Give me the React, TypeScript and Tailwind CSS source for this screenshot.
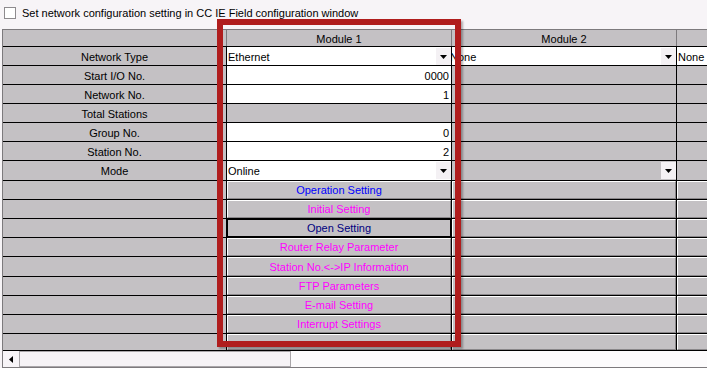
import React from "react";

type Cell =
  | { kind: "gray" }
  | { kind: "num"; text: string }
  | { kind: "select"; text: string; clip?: boolean }
  | { kind: "graySelect" }
  | { kind: "white"; text: string }
  | { kind: "btn"; text?: string; color?: string; focused?: boolean };

const labels = [
  "Network Type",
  "Start I/O No.",
  "Network No.",
  "Total Stations",
  "Group No.",
  "Station No.",
  "Mode",
  "",
  "",
  "",
  "",
  "",
  "",
  "",
  "",
  "",
];

// the original grid is not perfectly regular: two rows are a pixel taller, the last is cut by the scrollbar
const rowHeight = (i: number) => {
  if (i === 6 || i === 11) return "h-[20px]";
  if (i === 15) return "h-[17px]";
  return "h-[19px]";
};

const PINK = "text-[#ff00ff]";

const module1: Cell[] = [
  { kind: "select", text: "Ethernet" },
  { kind: "num", text: "0000" },
  { kind: "num", text: "1" },
  { kind: "gray" },
  { kind: "num", text: "0" },
  { kind: "num", text: "2" },
  { kind: "select", text: "Online" },
  { kind: "btn", text: "Operation Setting", color: "text-[#0000ff]" },
  { kind: "btn", text: "Initial Setting", color: PINK },
  { kind: "btn", text: "Open Setting", color: "text-[#000080]", focused: true },
  { kind: "btn", text: "Router Relay Parameter", color: PINK },
  { kind: "btn", text: "Station No.<->IP Information", color: PINK },
  { kind: "btn", text: "FTP Parameters", color: PINK },
  { kind: "btn", text: "E-mail Setting", color: PINK },
  { kind: "btn", text: "Interrupt Settings", color: PINK },
  { kind: "btn" },
];

const module2: Cell[] = [
  { kind: "select", text: "None", clip: true },
  { kind: "gray" },
  { kind: "gray" },
  { kind: "gray" },
  { kind: "gray" },
  { kind: "gray" },
  { kind: "graySelect" },
  ...Array.from({ length: 9 }, (): Cell => ({ kind: "btn" })),
];

const module3: Cell[] = [
  { kind: "white", text: "None" },
  ...Array.from({ length: 6 }, (): Cell => ({ kind: "gray" })),
  ...Array.from({ length: 9 }, (): Cell => ({ kind: "btn" })),
];

const DropButton: React.FC = () => (
  <div className="absolute right-0 top-[1px] w-[15px] h-[17px] bg-[#f4f1f4] flex items-center justify-center">
    <svg width="7" height="4" viewBox="0 0 7 4">
      <path d="M0 0h7L3.5 4z" fill="#000" />
    </svg>
  </div>
);

const GridCell: React.FC<{ cell: Cell }> = ({ cell }) => {
  switch (cell.kind) {
    case "gray":
      return <div className="h-full bg-[#c4c1c4]" />;
    case "num":
      return (
        <div className="h-full bg-white flex items-center justify-end pr-[2px] pt-[2px]">
          {cell.text}
        </div>
      );
    case "white":
      return (
        <div className="h-full bg-white flex items-center pl-[1px] pt-[2px] whitespace-nowrap">
          {cell.text}
        </div>
      );
    case "select":
      return (
        <div className="relative h-full bg-white flex items-center pt-[2px] overflow-hidden whitespace-nowrap">
          <span className={cell.clip ? "-ml-[2px]" : "pl-[1px]"}>{cell.text}</span>
          <DropButton />
        </div>
      );
    case "graySelect":
      return (
        <div className="relative h-full bg-[#c4c1c4]">
          <DropButton />
        </div>
      );
    case "btn":
      return (
        <div
          className={`h-full bg-[#c4c1c4] flex items-center justify-center pt-[1px] whitespace-nowrap ${
            cell.focused
              ? "border border-black"
              : "border-t border-l border-t-white border-l-white border-b border-r border-b-[#8a878a] border-r-[#8a878a]"
          } ${cell.color ?? ""}`}
        >
          {cell.text}
        </div>
      );
  }
};

export default function App() {
  return (
    <div className="w-[707px] h-[368px] overflow-hidden bg-[#f7f4f7] font-['Liberation_Sans',Arial,sans-serif] text-[11px] text-black leading-none relative select-none">
      {/* top checkbox */}
      <div className="h-[29px] flex items-start pt-[7px] pl-[4px]">
        <div className="w-[12px] h-[12px] border border-[#8e8b8e] bg-white" />
        <span className="ml-[6px] mt-[1px]">
          Set network configuration setting in CC IE Field configuration window
        </span>
      </div>

      {/* grid */}
      <div className="ml-[2px] border-l border-t border-[#7d7a7d] w-[720px]">
        <div className="flex h-[17px] border-b border-black">
          <div className="w-[224px] shrink-0 bg-[#c4c1c4] border-r border-[#7d7a7d]" />
          <div className="w-[225px] shrink-0 bg-[#c4c1c4] border-r border-[#7d7a7d] flex items-center justify-center pt-[2px]">
            Module 1
          </div>
          <div className="w-[225px] shrink-0 bg-[#c4c1c4] border-r border-[#7d7a7d] flex items-center justify-center pt-[2px]">
            Module 2
          </div>
          <div className="flex-1 bg-[#c4c1c4]" />
        </div>
        {labels.map((label, i) => (
          <div key={i} className={`flex border-b border-black ${rowHeight(i)}`}>
            <div className="w-[224px] shrink-0 bg-[#c4c1c4] border-r border-black flex items-center justify-center pt-[2px]">
              {label}
            </div>
            <div className="w-[225px] shrink-0 border-r border-black">
              <GridCell cell={module1[i]} />
            </div>
            <div className="w-[225px] shrink-0 border-r border-black">
              <GridCell cell={module2[i]} />
            </div>
            <div className="flex-1">
              <GridCell cell={module3[i]} />
            </div>
          </div>
        ))}
      </div>

      {/* horizontal scrollbar */}
      <div className="ml-[2px] h-[17px] flex border-l border-b border-[#7d7a7d]">
        <div className="w-[16px] shrink-0 bg-[#f7f4f7] flex items-center justify-center">
          <svg width="4" height="7" viewBox="0 0 4 7">
            <path d="M4 0v7L0 3.5z" fill="#000" />
          </svg>
        </div>
        <div className="w-[272px] shrink-0 bg-[#f6f3f6] border border-[#a9a6a9]" />
        <div className="flex-1 bg-[#fcfbfc]" />
      </div>

      {/* highlight frame */}
      <div className="absolute left-[217px] top-[19px] w-[244px] h-[328px] border-[6px] border-[#b01d1d] shadow-[2px_2px_2px_rgba(0,0,0,0.3)] pointer-events-none" />
    </div>
  );
}
